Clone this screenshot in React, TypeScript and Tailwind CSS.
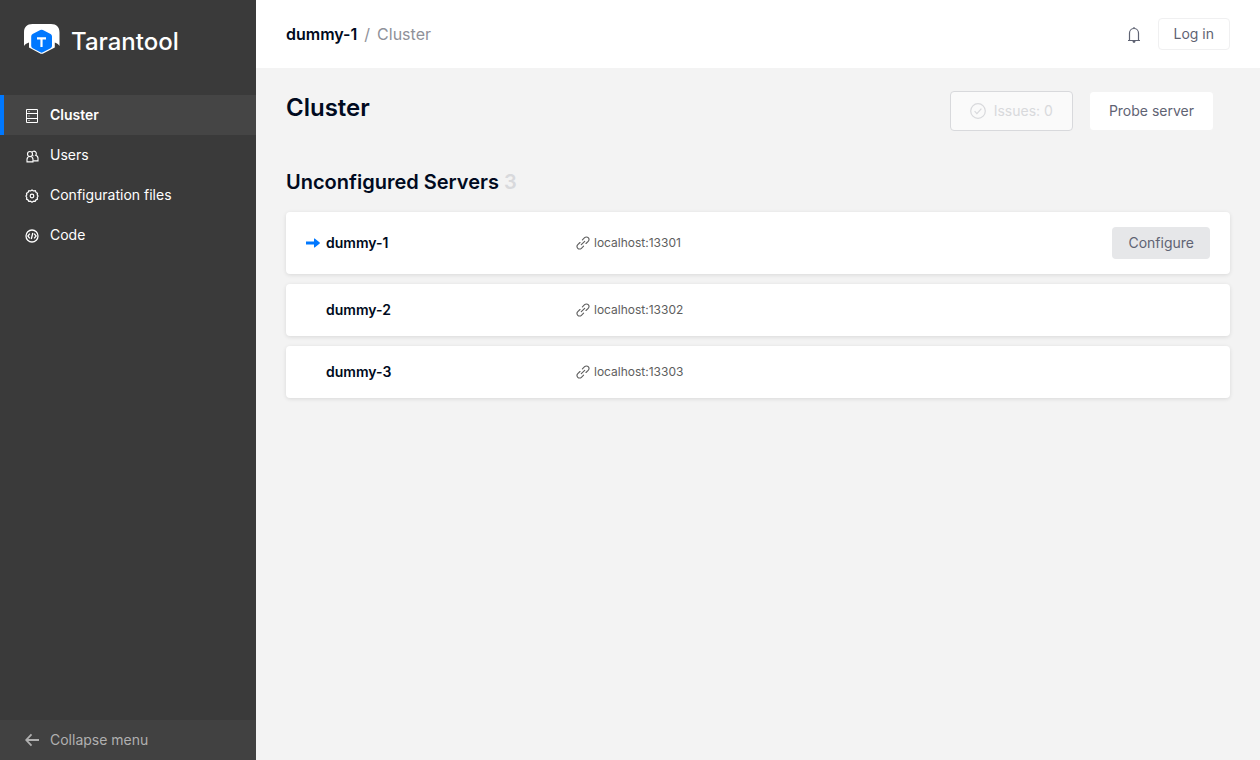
import type { ReactNode } from 'react';

function Logo() {
  return (
    <svg width="36" height="30" viewBox="0 0 36 30" aria-hidden="true">
      <path
        d="M0 22V8.500C0 3 3 0 8.500 0h18.500C32.500 0 35.500 3 35.500 8.500V22c-.8-1.800-2.200-2.800-4.700-3.600v5.200L18.700 29.800h-2L5 23.600v-5.200C2.400 19.200.8 20.200 0 22Z"
        fill="#fff"
      />
      <path
        d="M16.300 6.100a2.600 2.600 0 0 1 2.600 0l7.700 4a2.600 2.600 0 0 1 1.400 2.300v9.600a2.600 2.600 0 0 1-1.400 2.300l-7.700 4a2.600 2.600 0 0 1-2.600 0l-7.700-4A2.600 2.600 0 0 1 7.200 22v-9.600a2.600 2.600 0 0 1 1.400-2.300Z"
        fill="#0078ff"
      />
      <path d="M13 14.300h9M17.500 14.300V23" stroke="#fff" strokeWidth="2.200" fill="none" />
    </svg>
  );
}

const line = { fill: 'none', stroke: 'currentColor' } as const;

function ServerIcon() {
  return (
    <svg width="14" height="14" viewBox="0 0 14 14" {...line} aria-hidden="true">
      <path d="M1.500.5h11v13h-11zM1.500 4.500h11M1.500 9.500h11" />
      <path d="M3.500 2.500h1M3.500 7h1M3.500 11.500h1" />
    </svg>
  );
}

function UsersIcon() {
  return (
    <svg width="14" height="14" viewBox="0 0 14 14" {...line} strokeWidth="1.100" aria-hidden="true">
      <circle cx="5" cy="5" r="2.500" />
      <path d="M2 12.900v-2.400C2 8.800 3.300 7.500 5 7.500s3 1.300 3 3v2.400Z" />
      <path d="M6.900 3.300a2.400 2.400 0 1 1 3.700 3c1.400.4 2.400 1.500 2.400 3v2.600H8.200M7.300 6.500l1.200.5" />
    </svg>
  );
}

function GearIcon() {
  return (
    <svg width="14" height="14" viewBox="0 0 14 14" {...line} strokeWidth="1.200" aria-hidden="true">
      <path
        strokeLinejoin="round"
        d="M5.500 2 7 .9 8.500 2l1.900-.3.600 1.700 1.500.9-.3 1.500.9 1.200-.9 1.500.3 1.600-1.600.8-.8 1.500-1.600-.2L7 13.200 5.500 12.200l-1.700.2L3 10.900l-1.500-.8.300-1.600L.9 7l.9-1.200-.3-1.500L3 3.400l.8-1.700Z"
      />
      <circle cx="7" cy="7" r="1.800" />
    </svg>
  );
}

function CodeIcon() {
  return (
    <svg width="14" height="14" viewBox="0 0 14 14" {...line} strokeWidth="1.300" aria-hidden="true">
      <circle cx="7" cy="7" r="6" />
      <path d="M4.800 4.600 2.900 7l1.900 2.400M9.200 4.600 11.100 7 9.200 9.400M7.800 4 6.300 10" />
    </svg>
  );
}

function BackIcon() {
  return (
    <svg width="14" height="14" viewBox="0 0 14 14" {...line} strokeWidth="1.800" aria-hidden="true">
      <path d="M14 7H1.500M6.500 1.400 1.200 7l5.300 5.600" />
    </svg>
  );
}

function BellIcon() {
  return (
    <svg width="14" height="16" viewBox="0 0 14 16" {...line} strokeWidth="1.200" aria-hidden="true">
      <path d="M1 13.500h12M2.500 13.500V6a4.500 4.500 0 0 1 9 0v7.500M7 0v1.700" />
      <path d="M5.600 14h2.800v.6a1.400 1.400 0 0 1-2.800 0Z" fill="currentColor" stroke="none" />
    </svg>
  );
}

function CheckCircleIcon() {
  return (
    <svg width="16" height="16" viewBox="0 0 16 16" {...line} strokeWidth="1.200" aria-hidden="true">
      <circle cx="8" cy="8" r="7.300" />
      <path d="m4.600 8.200 2.300 2.400 4.500-5" />
    </svg>
  );
}

function LeaderIcon() {
  return (
    <svg width="14" height="10" viewBox="0 0 14 10" aria-hidden="true">
      <path d="M0 3.500h8V.8c0-.3.400-.5.700-.3l5 4.100c.3.200.3.600 0 .8l-5 4.100c-.3.200-.7 0-.7-.3V6.500H0Z" fill="#0078ff" />
    </svg>
  );
}

function LinkIcon() {
  return (
    <svg width="14" height="14" viewBox="0 0 14 14" {...line} strokeWidth="1.100" strokeLinecap="round" aria-hidden="true">
      <path d="M6.400 3.900 8.600 1.700c1-1 2.700-1 3.600 0s1 2.600 0 3.600L10 7.500M7.600 10.100l-2.200 2.200c-1 1-2.700 1-3.600 0s-1-2.600 0-3.600L4 6.500M5.300 8.700l3.400-3.400" />
    </svg>
  );
}

type NavItem = { label: string; icon: ReactNode; active?: boolean };

const navItems: NavItem[] = [
  { label: 'Cluster', icon: <ServerIcon />, active: true },
  { label: 'Users', icon: <UsersIcon /> },
  { label: 'Configuration files', icon: <GearIcon /> },
  { label: 'Code', icon: <CodeIcon /> },
];

type Server = { name: string; uri: string; self?: boolean };

const servers: Server[] = [
  { name: 'dummy-1', uri: 'localhost:13301', self: true },
  { name: 'dummy-2', uri: 'localhost:13302' },
  { name: 'dummy-3', uri: 'localhost:13303' },
];

function Sidebar() {
  return (
    <aside className="flex w-64 shrink-0 flex-col bg-[#3a3a3a] text-white">
      <a href="#" className="flex items-start gap-[11px] px-6 pt-6">
        <Logo />
        <span className="pt-0.5 text-2xl leading-8 font-medium">Tarantool</span>
      </a>
      <nav className="mt-[37px] flex flex-1 flex-col">
        {navItems.map((item) => (
          <a
            key={item.label}
            href="#"
            aria-current={item.active ? 'page' : undefined}
            className={
              item.active
                ? 'flex h-10 items-center gap-2.5 border-l-4 border-[#0078ff] bg-[#454545] pl-5 font-semibold'
                : 'flex h-10 items-center gap-2.5 border-l-4 border-transparent pl-5'
            }
          >
            <span className="flex w-4 justify-center pt-0.5">{item.icon}</span>
            {item.label}
          </a>
        ))}
      </nav>
      <button type="button" className="flex h-10 items-center gap-2.5 bg-[#414141] pl-6 text-[#b0b0b0]">
        <span className="flex w-4 justify-center">
          <BackIcon />
        </span>
        Collapse menu
      </button>
    </aside>
  );
}

function ServerRow({ server }: { server: Server }) {
  return (
    <li
      className={
        server.self
          ? 'flex min-h-[62px] items-center rounded bg-white px-5 shadow-[0_1px_4px_rgba(0,0,0,0.11)]'
          : 'flex min-h-[52px] items-center rounded bg-white px-5 shadow-[0_1px_4px_rgba(0,0,0,0.11)]'
      }
    >
      <span className="w-5">{server.self && <LeaderIcon />}</span>
      <span className="w-[250px] font-semibold text-[#000a20]">{server.name}</span>
      <span className="flex flex-1 items-center gap-1 text-xs text-[#5e5e5e]">
        <LinkIcon />
        {server.uri}
      </span>
      {server.self && (
        <button type="button" className="h-8 rounded bg-[#e6e7e9] px-4 text-[#5f6373]">
          Configure
        </button>
      )}
    </li>
  );
}

export default function App() {
  return (
    <div className="flex min-h-screen bg-[#f3f3f3] font-[Inter,sans-serif] text-sm leading-[22px]">
      <Sidebar />
      <div className="flex flex-1 flex-col">
        <header className="flex h-[68px] items-center justify-between bg-white px-[30px]">
          <nav aria-label="Breadcrumb" className="flex gap-[7px] text-base text-[#8f9199]">
            <a href="#" className="font-semibold text-[#000a20]">dummy-1</a>
            <span>/</span>
            <span>Cluster</span>
          </nav>
          <div className="flex items-center gap-[17px] text-[#5f6373]">
            <button type="button" aria-label="Notifications" className="pt-0.5">
              <BellIcon />
            </button>
            <button type="button" className="h-8 rounded border border-[#f0f0f1] px-[15px]">
              Log in
            </button>
          </div>
        </header>
        <main className="px-[30px]">
          <div className="flex items-start justify-between pt-[23px] pr-4">
            <h1 className="text-2xl leading-[34px] font-semibold text-[#000a20]">Cluster</h1>
            <div className="flex gap-4">
              <button
                type="button"
                disabled
                className="flex h-10 items-center gap-2 rounded border border-[#d8d9dc] bg-[#fafafa] px-[19px] text-[#d8d9dc]"
              >
                <CheckCircleIcon />
                Issues: 0
              </button>
              <button type="button" className="h-10 rounded border border-[#f3f3f3] bg-white px-[19px] text-[#5f6373]">
                Probe server
              </button>
            </div>
          </div>
          <section className="mt-[37px]">
            <h2 className="text-xl font-semibold text-[#000a20]">
              Unconfigured Servers <span className="text-[#d8d9dc]">3</span>
            </h2>
            <ul className="mt-4 flex flex-col gap-2.5">
              {servers.map((server) => (
                <ServerRow key={server.name} server={server} />
              ))}
            </ul>
          </section>
        </main>
      </div>
    </div>
  );
}
